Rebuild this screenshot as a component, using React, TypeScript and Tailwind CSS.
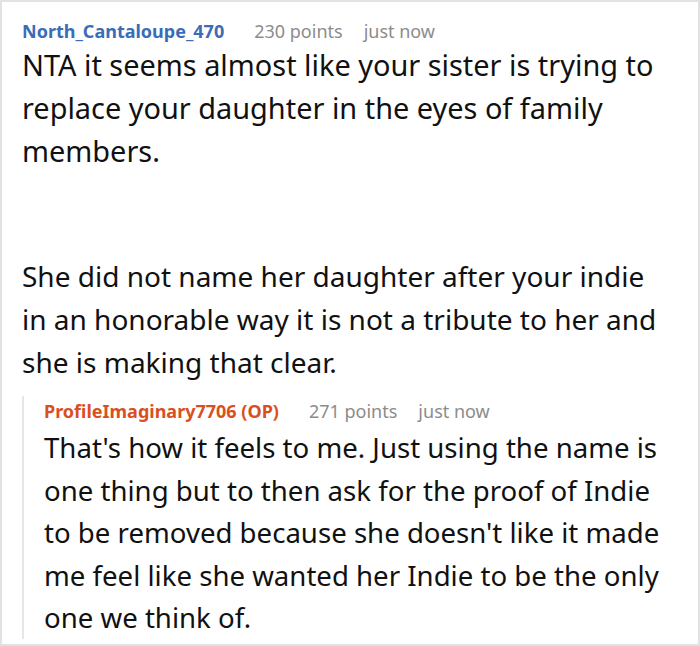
import React from 'react';

const font = { fontFamily: '"Noto Sans", "Open Sans", sans-serif' };

const Header: React.FC<{ name: string; color: string; points: number }> = ({ name, color, points }) => (
  <div className="flex items-baseline text-[18px] leading-[26px]">
    <span className={`font-bold ${color}`}>{name}</span>
    <span className="ml-[30px] text-[#8c8c8c]">{points} points</span>
    <span className="ml-[21px] text-[#8c8c8c]">just now</span>
  </div>
);

const App: React.FC = () => {
  return (
    <div className="w-[700px] h-[646px] bg-white" style={font}>
      <div className="h-full border-2 border-[#e2e2e2] pt-[16px] pl-[20px] pr-[10px] overflow-hidden">
        <Header name="North_Cantaloupe_470" color="text-[#3b6cb7]" points={230} />
        <div className="leading-[43px] text-[#111] -mt-[1px]">
          <p className="w-[650px] text-[28.9px]">
            NTA it seems almost like your sister is trying to replace your daughter in the eyes of family members.
          </p>
          <p className="mt-[83px] w-[650px] text-[28px]">
            She did not name her daughter after your indie in an honorable way it is not a tribute to her and she is
            making that clear.
          </p>
        </div>
        <div className="mt-[12px] border-l-2 border-[#e6e6e6] pl-[20px] pt-[2px]">
          <Header name="ProfileImaginary7706 (OP)" color="text-[#d9501e]" points={271} />
          <p className="mt-[2px] w-[630px] text-[27.6px] leading-[42.5px] text-[#111]">
            That's how it feels to me. Just using the name is one thing but to then ask for the proof of Indie to be
            removed because she doesn't like it made me feel like she wanted her Indie to be the only one we think of.
          </p>
        </div>
      </div>
    </div>
  );
};

export default App;
